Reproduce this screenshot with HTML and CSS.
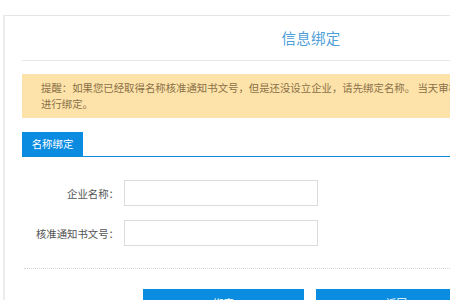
FILE: index.html
```html
<!DOCTYPE html>
<html lang="zh-CN">
<head>
<meta charset="utf-8">
<title>信息绑定</title>
<link rel="stylesheet" href="styles.css">
</head>
<body>
<div class="panel">
  <div class="inner">
    <div class="header"><h1 class="title">信息绑定</h1></div>
    <div class="notice">提醒：如果您已经取得名称核准通知书文号，但是还没设立企业，请先绑定名称。&nbsp;当天审核通过的名称需要在第二天进行绑定。<br>进行绑定。</div>
    <div class="tabs"><span class="tab">名称绑定</span></div>
    <div class="form">
      <div class="row"><label class="label">企业名称：</label><input class="field" type="text"></div>
      <div class="row"><label class="label">核准通知书文号：</label><input class="field" type="text"></div>
    </div>
    <div class="divider"></div>
    <div class="actions">
      <button class="btn">绑定</button>
      <button class="btn">返回</button>
    </div>
  </div>
</div>
</body>
</html>
```
FILE: styles.css
```css
html, body {
  margin: 0;
  padding: 0;
  background: #fff;
  overflow: hidden;
  font-family: "Noto Sans CJK SC", "Noto Sans", sans-serif;
}
.panel {
  margin: 15px 0 0 3px;
  border: 1px solid #e4e4e4;
  border-left: 2px solid #ececec;
  width: 640px;
  height: 400px;
}
.inner {
  margin-left: 17px;
  width: 578px;
}
.header {
  height: 44px;
  border-bottom: 1px solid #e8e8e8;
  display: flex;
  align-items: center;
  justify-content: center;
}
.title {
  margin: 0;
  font-size: 14.5px;
  font-weight: normal;
  color: #4fa0d8;
  line-height: 1;
  letter-spacing: 0.3px;
}
.notice {
  margin-top: 13px;
  height: 44px;
  box-sizing: border-box;
  background: #fde3a9;
  color: #8a7048;
  font-size: 10.4px;
  line-height: 16px;
  padding: 6px 0 0 19px;
  white-space: nowrap;
  overflow: hidden;
  width: 640px;
}
.tabs {
  margin-top: 14px;
  border-bottom: 1px solid #1288d8;
  height: 24px;
  display: flex;
  width: 640px;
}
.tab {
  background: #0c8ce0;
  color: #fff;
  font-size: 10.4px;
  line-height: 24px;
  width: 61px;
  text-align: center;
}
.form {
  padding-top: 23px;
  display: flex;
  flex-direction: column;
  gap: 14px;
}
.row {
  display: flex;
  align-items: center;
  height: 26px;
}
.label {
  width: 97px;
  text-align: right;
  font-size: 10.4px;
  color: #555;
  margin-right: 5px;
}
.field {
  box-sizing: border-box;
  width: 194px;
  height: 26px;
  border: 1px solid #dcdcdc;
  margin: 0;
  padding: 0 4px;
  background: #fff;
  outline: none;
}
.divider {
  margin: 22px 0 0 2px;
  border-top: 1px dotted #d6d6d6;
  width: 640px;
}
.actions {
  margin-top: 20px;
  padding-left: 121px;
  display: flex;
  gap: 12px;
}
.btn {
  width: 161px;
  height: 28px;
  border: none;
  background: #0a8ce0;
  color: #fff;
  font-family: inherit;
  font-size: 10.4px;
  line-height: 28px;
  padding: 0;
  flex-shrink: 0;
}
```
